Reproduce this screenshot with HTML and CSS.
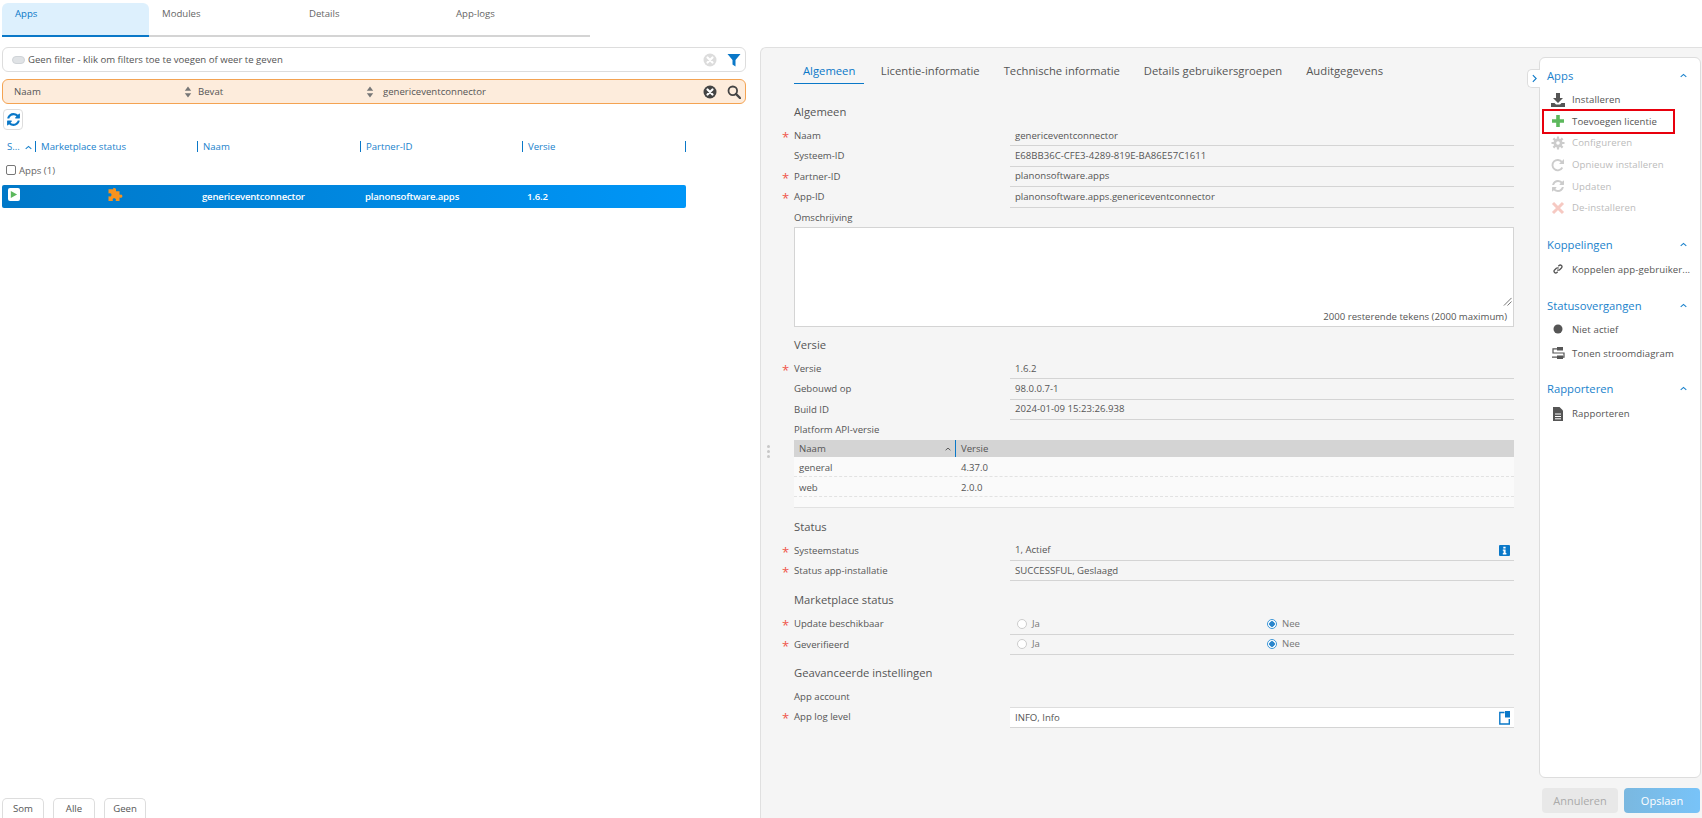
FILE: index.html
```html
<!DOCTYPE html>
<html>
<head>
    <meta charset="utf-8" />
    <title>Apps</title>
    <link rel="stylesheet" href="styles.css">
</head>
<body>
    <svg class="defs" width="0" height="0">
        <symbol id="sync" viewBox="0 0 1792 1792"><path d="M1639 1056q0 5-1 7-64 268-268 434.500t-478 166.500q-146 0-282.500-55t-243.500-157l-129 129q-19 19-45 19t-45-19-19-45v-448q0-26 19-45t45-19h448q26 0 45 19t19 45-19 45l-137 137q71 66 161 102t187 36q134 0 250-65t186-179q11-17 53-117 8-23 30-23h192q13 0 22.500 9.500t9.500 22.500zm25-800v448q0 26-19 45t-45 19h-448q-26 0-45-19t-19-45 19-45l138-138q-148-137-349-137-134 0-250 65t-186 179q-11 17-53 117-8 23-30 23h-199q-13 0-22.500-9.500t-9.500-22.500v-7q65-268 270-434.500t480-166.500q146 0 284 55.500t245 156.500l130-129q19-19 45-19t45 19 19 45z"/></symbol>
        <symbol id="sort" viewBox="0 0 8 12"><path d="M4 0.500l3.200 4.200h-6.400zM4 11.500l3.200-4.200h-6.400z"/></symbol>
        <symbol id="chev" viewBox="0 0 10 6"><path d="M1 5l4-3.500 4 3.500" fill="none" stroke="currentColor" stroke-width="1.600"/></symbol>
        <symbol id="clear" viewBox="0 0 14 14"><circle cx="7" cy="7" r="6.500"/><path d="M4.500 4.500l5 5M9.500 4.500l-5 5" stroke="#fff" stroke-width="2.200" stroke-linecap="round"/></symbol>
    </svg>

    <div class="left">
        <div class="tabs">
            <div class="tab active">Apps</div>
            <div class="tab">Modules</div>
            <div class="tab">Details</div>
            <div class="tab">App-logs</div>
        </div>

        <div class="filter-bar">
            <span class="toggle"></span>
            <span class="filter-text">Geen filter - klik om filters toe te voegen of weer te geven</span>
            <svg class="bar-icon clear-off"><use href="#clear"/></svg>
            <svg class="bar-icon funnel" viewBox="0 0 14 14"><path d="M0.500 1h13l-5 6v6.500l-3-2v-4.500z"/></svg>
        </div>

        <div class="search-bar">
            <span class="col-field">Naam</span>
            <svg class="sort-arrows"><use href="#sort"/></svg>
            <span class="col-op">Bevat</span>
            <svg class="sort-arrows"><use href="#sort"/></svg>
            <span class="col-value">genericeventconnector</span>
            <svg class="bar-icon clear-on"><use href="#clear"/></svg>
            <svg class="bar-icon lens" viewBox="0 0 14 14"><circle cx="5.800" cy="5.800" r="4.300" fill="none" stroke="#444" stroke-width="1.800"/><path d="M9 9l4 4" stroke="#444" stroke-width="2.400" stroke-linecap="round"/></svg>
        </div>

        <div class="refresh"><svg><use href="#sync"/></svg></div>

        <div class="grid-head">
            <div class="gh gh-s">S...<svg class="gh-chev"><use href="#chev"/></svg></div>
            <div class="gh gh-m">Marketplace status</div>
            <div class="gh gh-n">Naam</div>
            <div class="gh gh-p">Partner-ID</div>
            <div class="gh gh-v">Versie</div>
        </div>

        <div class="group-row"><span class="check"></span>Apps (1)</div>

        <div class="grid-row">
            <div class="cell-s"><span class="play"><svg viewBox="0 0 10 10"><path d="M2 1l7 4-7 4z"/></svg></span></div>
            <div class="cell-m">
                <svg viewBox="0 0 16 16"><path d="M6 1.500c1.600-1.200 3.600 0 3 2-.1.500.2.800.6.800h2.900v3c0 .5.500.7 1 .4 1.500-.8 2.700 1.800 1.200 2.900-.8.500-1.500 0-2.200-.1v3.500h-3.400c-.5 0-.6-.5-.3-1 .8-1.500-2.400-2.800-3.100-.8-.2.600.2 1.200.1 1.800h-4.300v-4.300c0-.5.600-.4 1-.2 1.800.7 2.900-2.700.9-3.200-.6-.1-1.200.2-1.900.2v-4.200h4.200c.7 0 .9-.5.600-1-.3-.6-.2-1.300-.3-1.800z"/></svg>
            </div>
            <div class="cell-n">genericeventconnector</div>
            <div class="cell-p">planonsoftware.apps</div>
            <div class="cell-v">1.6.2</div>
        </div>

        <div class="left-foot">
            <button class="foot-btn">Som</button>
            <button class="foot-btn">Alle</button>
            <button class="foot-btn">Geen</button>
        </div>
    </div>

    <div class="panel">
        <div class="splitter"><i></i><i></i><i></i></div>
        <div class="form">
            <div class="form-tabs">
                <div class="form-tab active">Algemeen</div>
                <div class="form-tab">Licentie-informatie</div>
                <div class="form-tab">Technische informatie</div>
                <div class="form-tab">Details gebruikersgroepen</div>
                <div class="form-tab">Auditgegevens</div>
            </div>

            <h3 class="first">Algemeen</h3>
            <div class="row"><label class="req">Naam</label><div class="val">genericeventconnector</div></div>
            <div class="row"><label>Systeem-ID</label><div class="val">E68BB36C-CFE3-4289-819E-BA86E57C1611</div></div>
            <div class="row"><label class="req">Partner-ID</label><div class="val">planonsoftware.apps</div></div>
            <div class="row"><label class="req">App-ID</label><div class="val">planonsoftware.apps.genericeventconnector</div></div>
            <div class="row plain"><label>Omschrijving</label></div>
            <div class="textarea">
                <svg class="grip" viewBox="0 0 10 10"><path d="M9.500 1l-8.500 8.500M9.500 5l-4.500 4.500" stroke="#666" fill="none"/></svg>
                <div class="counter">2000 resterende tekens (2000 maximum)</div>
            </div>

            <h3 class="tight">Versie</h3>
            <div class="row"><label class="req">Versie</label><div class="val">1.6.2</div></div>
            <div class="row"><label>Gebouwd op</label><div class="val">98.0.0.7-1</div></div>
            <div class="row"><label>Build ID</label><div class="val">2024-01-09 15:23:26.938</div></div>
            <div class="row plain"><label>Platform API-versie</label></div>
            <div class="mini">
                <div class="mini-head">
                    <div class="mini-a">Naam<svg class="mini-chev"><use href="#chev"/></svg></div>
                    <div class="mini-b">Versie</div>
                </div>
                <div class="mini-row"><div class="mini-a">general</div><div class="mini-b">4.37.0</div></div>
                <div class="mini-row"><div class="mini-a">web</div><div class="mini-b">2.0.0</div></div>
                <div class="mini-end"></div>
            </div>

            <h3>Status</h3>
            <div class="row"><label class="req">Systeemstatus</label><div class="val">1, Actief
                <svg class="info" viewBox="0 0 11 11"><rect width="11" height="11" rx="1" fill="#0a78c8"/><path d="M4.300 1.800h2.300v1.700h-2.300zM3.800 4.400h2.800v3.700h.8v1.300h-3.600v-1.300h.8v-2.400h-.8z" fill="#fff"/></svg>
            </div></div>
            <div class="row"><label class="req">Status app-installatie</label><div class="val">SUCCESSFUL, Geslaagd</div></div>

            <h3>Marketplace status</h3>
            <div class="row"><label class="req">Update beschikbaar</label><div class="val radios"><span class="opt"><span class="radio"></span>Ja</span><span class="opt"><span class="radio on"></span>Nee</span></div></div>
            <div class="row"><label class="req">Geverifieerd</label><div class="val radios"><span class="opt"><span class="radio"></span>Ja</span><span class="opt"><span class="radio on"></span>Nee</span></div></div>

            <h3 class="tight">Geavanceerde instellingen</h3>
            <div class="row"><label>App account</label></div>
            <div class="row"><label class="req">App log level</label><div class="val input">INFO, Info
                <svg class="picker" viewBox="0 0 11 14"><path d="M5.500 1.500h-4.700v11.500h9.500v-5" fill="none" stroke="#0a78c8" stroke-width="1.400"/><rect x="6" y="0" width="5" height="6.500" fill="#0a78c8"/></svg>
            </div></div>
        </div>

        <div class="side">
            <div class="actions">
                <div class="expand"><svg viewBox="0 0 6 10"><path d="M1 1l4 4-4 4" fill="none" stroke="#0a78c8" stroke-width="1.300"/></svg></div>

                <div class="act-head">Apps<svg><use href="#chev"/></svg></div>
                <div class="act">
                    <svg viewBox="0 0 14 14"><path d="M5 0h4v5h3l-5 5-5-5h3z" fill="#555"/><path d="M0 10h3.500l1.500 1.500h4l1.500-1.500h3.500v4h-14z" fill="#555"/></svg>
                    Installeren
                </div>
                <div class="act marked">
                    <svg viewBox="0 0 14 14"><path d="M5.200 1h3.600v4.200h4.200v3.600h-4.200v4.200h-3.600v-4.200h-4.200v-3.600h4.200z" fill="#5cb85c"/></svg>
                    Toevoegen licentie
                </div>
                <div class="act off">
                    <svg viewBox="0 0 14 14"><path d="M7 0.500v13M0.500 7h13M2.400 2.400l9.200 9.200M11.600 2.400l-9.200 9.200" stroke="#ccc" stroke-width="2.200"/><circle cx="7" cy="7" r="4.500" fill="#ccc"/><circle cx="7" cy="7" r="1.800" fill="#fff"/></svg>
                    Configureren
                </div>
                <div class="act off">
                    <svg viewBox="0 0 14 14"><path d="M11.300 9.500a5.200 5.200 0 1 1-.4-5.400" fill="none" stroke="#ccc" stroke-width="1.900"/><path d="M13 1v5h-5z" fill="#ccc"/></svg>
                    Opnieuw installeren
                </div>
                <div class="act off">
                    <svg class="fill-off"><use href="#sync"/></svg>
                    Updaten
                </div>
                <div class="act off">
                    <svg viewBox="0 0 14 14"><path d="M2 2l10 10M12 2l-10 10" stroke="#f6c9c2" stroke-width="3"/></svg>
                    De-installeren
                </div>

                <div class="act-head gap">Koppelingen<svg><use href="#chev"/></svg></div>
                <div class="act">
                    <svg class="link-icon" viewBox="0 0 14 14"><g fill="none" stroke="#555" stroke-width="1.800"><path d="M6 8a2.300 2.300 0 0 0 3.300 0l2.500-2.500a2.300 2.300 0 0 0-3.300-3.300l-1 1"/><path d="M8 6a2.300 2.300 0 0 0-3.300 0l-2.500 2.500a2.300 2.300 0 0 0 3.300 3.300l1-1"/></g></svg>
                    Koppelen app-gebruiker...
                </div>

                <div class="act-head gap status-head">Statusovergangen<svg><use href="#chev"/></svg></div>
                <div class="act tall">
                    <svg viewBox="0 0 14 14"><circle cx="7" cy="7" r="4.500" fill="#555"/></svg>
                    Niet actief
                </div>
                <div class="act tall">
                    <svg viewBox="0 0 14 14"><path d="M6 1h6v3.500h-6zM6 9.500h6v3.500h-6z" fill="#555"/><path d="M6 2.800h-4v4.200h11v4.200h-1M6 11.200h-5" fill="none" stroke="#555" stroke-width="1.200"/></svg>
                    Tonen stroomdiagram
                </div>

                <div class="act-head gap report-head">Rapporteren<svg><use href="#chev"/></svg></div>
                <div class="act">
                    <svg viewBox="0 0 14 14"><path d="M2 0h6.500l3.500 3.500v10.500h-10z" fill="#555"/><path d="M4 7h6M4 9.500h6M4 11.800h6" stroke="#fff"/></svg>
                    Rapporteren
                </div>
            </div>
            <div class="buttons">
                <button class="btn-cancel">Annuleren</button>
                <button class="btn-save">Opslaan</button>
            </div>
        </div>
    </div>
</body>
</html>
```

FILE: styles.css
```css
* {
    box-sizing: border-box;
}

html, body {
    height: 100%;
}

body {
    margin: 0;
    display: flex;
    font-family: "Open Sans", sans-serif;
    font-size: 9.6px;
    color: #555;
    background: #fff;
    overflow: hidden;
}

.defs {
    position: absolute;
}

/* left side */

.left {
    width: 760px;
    flex: none;
    height: 818px;
    padding: 3px 14px 0 2px;
    display: flex;
    flex-direction: column;
}

.tabs {
    display: flex;
    width: 588px;
    height: 34px;
    border-bottom: 2px solid #d4d4d4;
}

.tab {
    width: 147px;
    height: 34px;
    padding: 1px 0 0 13px;
    line-height: 20px;
    color: #666;
}

.tab.active {
    background: #ddf0fd;
    border-bottom: 2px solid #0a78c8;
    border-radius: 6px 6px 0 0;
    color: #0a78c8;
}

.filter-bar, .search-bar {
    display: flex;
    align-items: center;
    height: 25px;
    border-radius: 6px;
    padding: 0 4px 0 9px;
}

.filter-bar {
    margin-top: 10px;
    border: 1px solid #ddd;
}

.search-bar {
    margin-top: 7px;
    border: 1px solid #f4a352;
    background: #fdecdc;
    padding-left: 11px;
}

.toggle {
    width: 13px;
    height: 8px;
    border-radius: 4px;
    background: #e0e3e6;
    border: 1px solid #d0d4d8;
    margin-right: 3px;
}

.filter-text {
    flex: 1;
}

.bar-icon {
    width: 14px;
    height: 14px;
    flex: none;
}

.clear-off {
    fill: #dcdcdc;
    margin-right: 10px;
}

.funnel {
    fill: #0a78c8;
}

.col-field {
    width: 170px;
}

.sort-arrows {
    width: 8px;
    height: 12px;
    fill: #777;
    flex: none;
    margin-right: 6px;
}

.col-op {
    width: 168px;
    flex: none;
}

.col-value {
    flex: 1;
    margin-left: 3px;
}

.clear-on {
    fill: #444;
    margin-right: 10px;
}

.refresh {
    width: 20px;
    height: 21px;
    margin-top: 5px;
    margin-left: 1px;
    border: 1px solid #ddd;
    border-radius: 4px;
    display: flex;
    align-items: center;
    justify-content: center;
    fill: #0a78c8;
}

.refresh svg {
    width: 15px;
    height: 15px;
}

.grid-head {
    display: flex;
    width: 684px;
    height: 11px;
    margin-top: 11px;
    color: #1a82cc;
    line-height: 11px;
    border-right: 1px solid #0a78c8;
}

.gh {
    padding-left: 5px;
    position: relative;
    white-space: nowrap;
    border-left: 1px solid #0a78c8;
}

.gh-s {
    width: 33px;
    border-left: 0;
}

.gh-chev {
    width: 7px;
    height: 5px;
    margin-left: 5px;
    color: #1a82cc;
}

.gh-m {
    width: 162px;
}

.gh-n {
    width: 163px;
}

.gh-p {
    width: 162px;
}

.gh-v {
    flex: 1;
}

.group-row {
    display: flex;
    align-items: center;
    height: 20px;
    margin-top: 8px;
    padding-left: 4px;
    color: #666;
}

.check {
    width: 10px;
    height: 10px;
    border: 1px solid #777;
    border-radius: 2px;
    margin-right: 3px;
}

.grid-row {
    display: flex;
    align-items: center;
    width: 684px;
    height: 23px;
    margin-top: 5px;
    border-radius: 2px;
    background: linear-gradient(to right, #0078c8, #0096f7);
    color: #fff;
    font-weight: 600;
    letter-spacing: -0.2px;
}

.cell-s {
    width: 33px;
    padding-left: 6px;
}

.play {
    display: block;
    width: 12px;
    height: 13px;
    margin-top: -5px;
    background: #fff;
    border-radius: 2px;
    padding: 2px 1px;
    fill: #5cb85c;
}

.play svg {
    display: block;
    width: 9px;
    height: 9px;
}

.cell-m {
    width: 167px;
    padding-left: 72px;
    fill: #f7931e;
}

.cell-m svg {
    display: block;
    width: 16px;
    height: 16px;
    margin-top: -4px;
}

.cell-n {
    width: 163px;
}

.cell-p {
    width: 162px;
}

.left-foot {
    margin-top: auto;
    display: flex;
    gap: 9px;
}

.foot-btn {
    width: 42px;
    height: 20px;
    border: 1px solid #ddd;
    border-bottom: 0;
    border-radius: 5px 5px 0 0;
    background: #fff;
    font: inherit;
    color: #555;
    padding: 0;
}

/* right side */

.panel {
    flex: 1;
    height: 771px;
    margin-top: 47px;
    display: flex;
    position: relative;
    background: #f5f5f5;
    border: 1px solid #e0e0e0;
    border-width: 1px 0 0 1px;
    border-top-left-radius: 6px;
}

.splitter {
    position: absolute;
    left: 6px;
    top: 397px;
}

.splitter i {
    display: block;
    width: 3px;
    height: 3px;
    margin-bottom: 2px;
    border-radius: 50%;
    background: #c8c8c8;
}

.form {
    width: 720px;
    margin-left: 33px;
    flex: none;
}

.form-tabs {
    display: flex;
    gap: 6px;
    height: 26px;
    margin-top: 10px;
    font-size: 11.25px;
    line-height: 26px;
}

.form-tab {
    padding: 0 9px;
    color: #555;
}

.form-tab.active {
    color: #0a78c8;
    border-bottom: 1px solid #0a78c8;
    margin-right: 1.5px;
}

h3 {
    margin: 7px 0 2px;
    height: 24px;
    font-size: 11.25px;
    font-weight: 400;
    line-height: 24px;
    color: #555;
}

h3.first {
    margin-top: 16px;
}

h3.tight {
    margin-top: 6px;
}

.row {
    display: flex;
    height: 20.4px;
    line-height: 20px;
}

.row.plain {
    height: 19.4px;
}

.row label {
    width: 216px;
    flex: none;
    position: relative;
}

.req::before {
    content: "*";
    position: absolute;
    left: -12px;
    top: 1px;
    color: #f0564a;
    font-size: 13px;
}

.val {
    flex: 1;
    display: flex;
    align-items: center;
    justify-content: space-between;
    padding: 0 4px 0 5px;
    border-bottom: 1px solid #d4d4d4;
}

.input {
    background: #fff;
    border-top: 1px solid #ddd;
}

.info {
    width: 11px;
    height: 11px;
}

.picker {
    width: 11px;
    height: 14px;
}

.radios {
    justify-content: flex-start;
    padding-left: 7px;
}

.opt {
    display: flex;
    align-items: center;
    width: 250px;
    color: #777;
}

.opt + .opt {
    width: auto;
}

.radio {
    width: 10px;
    height: 10px;
    margin-right: 5px;
    border-radius: 50%;
    border: 1px solid #ccc;
    background: #fff;
}

.radio.on {
    border-color: #3d97d8;
    background: radial-gradient(circle, #2a86cc 0 2.500px, #fff 3px);
}

.textarea {
    position: relative;
    height: 100px;
    background: #fff;
    border: 1px solid #d4d4d4;
}

.grip {
    position: absolute;
    right: 1px;
    bottom: 20px;
    width: 9px;
    height: 9px;
}

.counter {
    position: absolute;
    right: 6px;
    bottom: 2px;
    line-height: 14px;
}

.mini {
    background: #fafafa;
}

.mini-head, .mini-row {
    display: flex;
    line-height: 21px;
}

.mini-head {
    height: 17px;
    line-height: 17px;
    background: #d4d4d4;
}

.mini-row {
    height: 20px;
    border-bottom: 1px dashed #e2e2e2;
}

.mini-end {
    height: 11px;
    border-bottom: 1px solid #e2e2e2;
}

.mini-a {
    width: 162px;
    padding-left: 5px;
    position: relative;
}

.mini-head .mini-a {
    border-right: 1px solid #0a78c8;
}

.mini-chev {
    position: absolute;
    right: 4px;
    top: 7px;
    width: 6px;
    height: 4px;
    color: #555;
}

.mini-b {
    padding-left: 5px;
}

/* actions on the far right */

.side {
    width: 162px;
    margin-left: 25px;
    padding-top: 9px;
    display: flex;
    flex-direction: column;
}

.actions {
    position: relative;
    height: 721px;
    padding: 6px 8px 0 7px;
    background: #fff;
    border: 1px solid #ddd;
    border-radius: 6px;
}

.expand {
    position: absolute;
    left: -13px;
    top: 11px;
    width: 13px;
    height: 19px;
    display: flex;
    align-items: center;
    justify-content: center;
    background: #fff;
    border: 1px solid #ddd;
    border-right: 0;
    border-radius: 5px 0 0 5px;
}

.expand svg {
    width: 5px;
    height: 9px;
}

.act-head {
    display: flex;
    align-items: center;
    justify-content: space-between;
    height: 22px;
    margin-bottom: 3px;
    font-size: 11.25px;
    color: #1a82cc;
}

.act-head svg {
    width: 7px;
    height: 5px;
    margin-right: 5px;
    color: #1a82cc;
}

.act-head.gap {
    margin-top: 15px;
}

.act-head.status-head {
    margin-top: 14px;
    margin-bottom: 1px;
}

.act-head.report-head {
    margin-top: 12px;
    margin-bottom: 4px;
}

.act {
    display: flex;
    align-items: center;
    gap: 7px;
    height: 21.6px;
    padding-left: 4px;
    white-space: nowrap;
    letter-spacing: 0.1px;
    color: #555;
}

.act svg {
    width: 14px;
    height: 14px;
    flex: none;
}

.act svg.link-icon {
    width: 10px;
    height: 10px;
    margin: 0 2px;
}

.act.tall {
    height: 24px;
}

.act.off {
    color: #bbb;
}

.fill-off {
    fill: #ccc;
}

.act.marked {
    outline: 2px solid #e8000d;
    outline-offset: 0;
    margin-right: 19px;
    margin-left: -3px;
    padding-left: 7px;
}

.buttons {
    display: flex;
    gap: 6px;
    margin-top: 10px;
    padding-left: 3px;
}

.buttons button {
    width: 76px;
    height: 25px;
    border: 0;
    border-radius: 4px;
    font: inherit;
    font-size: 11px;
}

.btn-cancel {
    background: #e8e8e8;
    color: #aaa;
}

.btn-save {
    background: linear-gradient(to right, #7ab8e0, #78c3f8);
    color: #fff;
}
```
